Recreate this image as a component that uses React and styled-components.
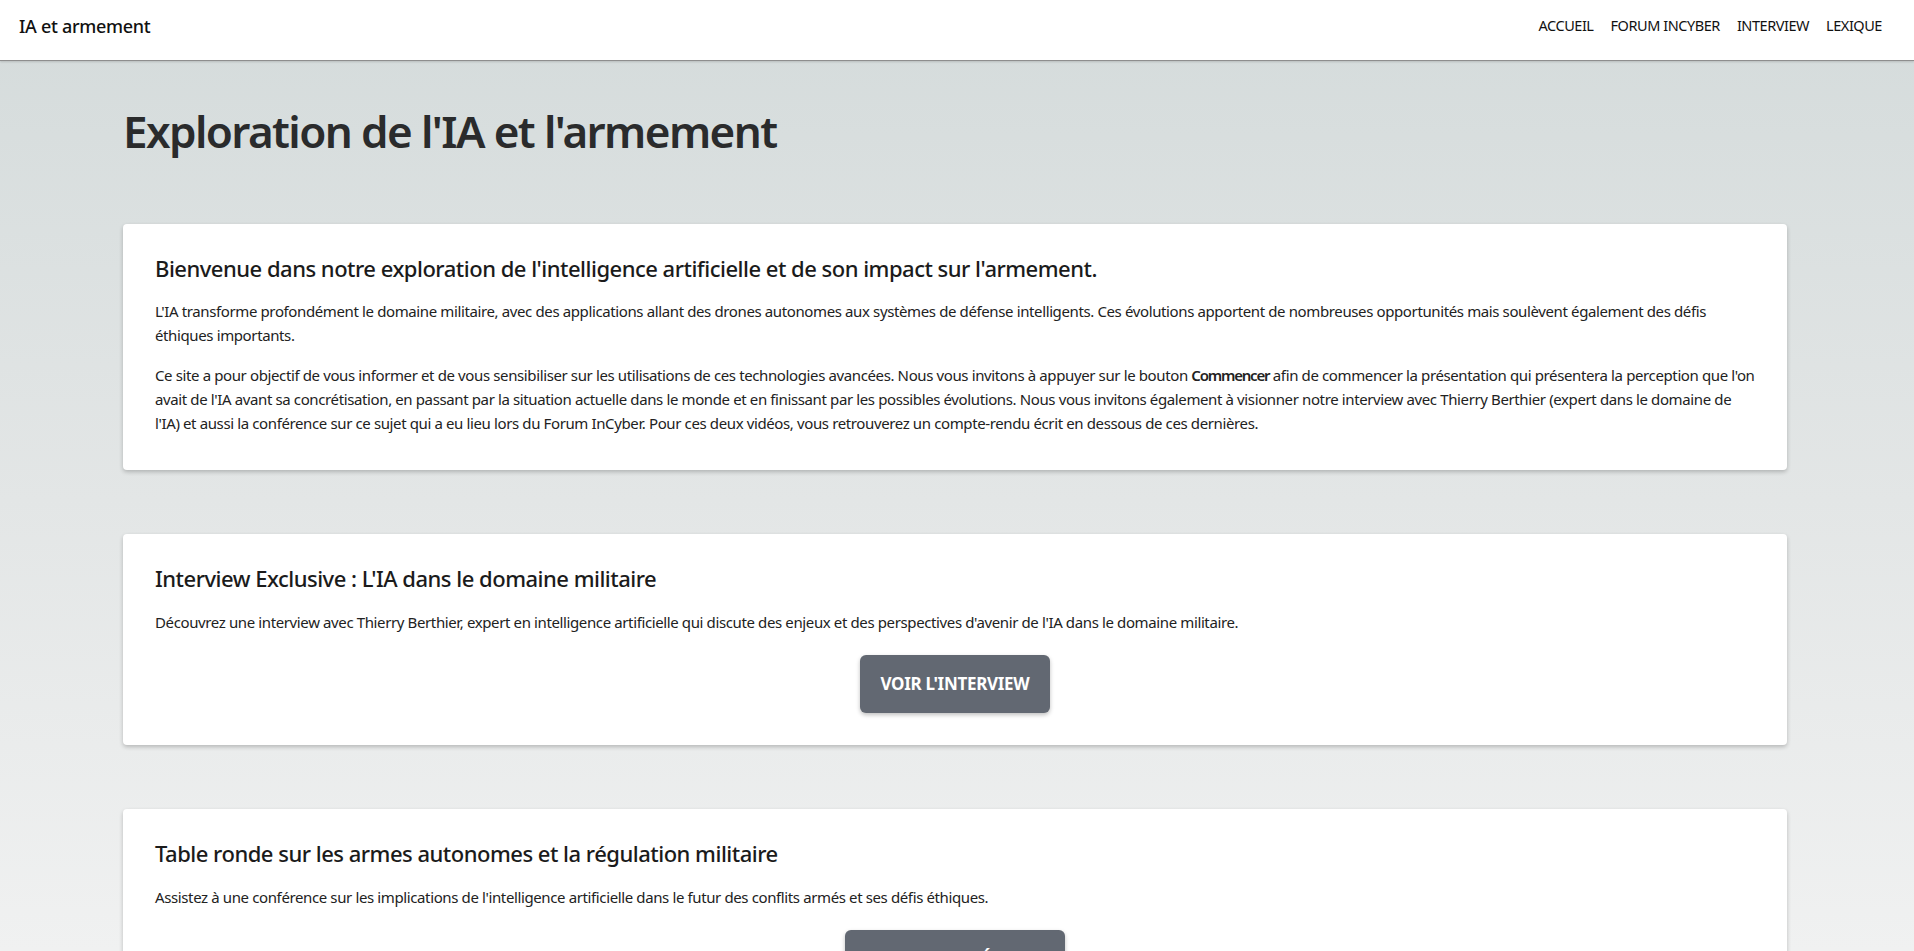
import React from "react";
import styled, { createGlobalStyle } from "styled-components";

const Global = createGlobalStyle`
  html, body { margin: 0; padding: 0; }
  body {
    font-family: "Noto Sans", "Open Sans", sans-serif;
    color: #222;
    background: linear-gradient(to bottom, #d4dbdb 0px, #e3e6e6 500px, #f0f1f1 951px);
    min-height: 951px;
  }
`;

const Nav = styled.header`
  height: 60px;
  background: #fff;
  border-bottom: 1px solid #8e8e8e;
  box-shadow: 0 1px 2px rgba(0,0,0,0.15);
  display: flex;
  align-items: center;
  justify-content: space-between;
  padding: 0 32px 0 19px;
`;

const Brand = styled.div`
  font-size: 18px;
  font-weight: 500;
  color: #111;
  letter-spacing: -0.3px;
  margin-top: -8px;
`;

const Links = styled.nav`
  display: flex;
  gap: 17px;
  margin-top: -10px;
`;

const Link = styled.a`
  font-size: 14.5px;
  color: #111;
  text-decoration: none;
  letter-spacing: -0.45px;
`;

const Main = styled.main`
  padding: 44px 127px 40px 123px;
  display: flex;
  flex-direction: column;
  gap: 64px;
`;

const Title = styled.h1`
  margin: 0;
  font-size: 44px;
  font-weight: 600;
  color: #2a2b2c;
  letter-spacing: -1.6px;
  line-height: 1.2;
  margin-bottom: 2px;
`;

const Card = styled.section`
  background: #fff;
  border-radius: 4px;
  box-shadow: 0 2px 4px rgba(0,0,0,0.22);
  padding: 30px 32px 32px;
  display: flex;
  flex-direction: column;
`;

const CardTitle = styled.h2`
  margin: 0 0 17px;
  font-size: 22px;
  font-weight: 500;
  color: #1b1b1b;
  letter-spacing: -0.5px;
  line-height: 1.3;
`;

const Text = styled.p`
  margin: 0 0 16px;
  font-size: 15px;
  line-height: 24px;
  color: #222;
  letter-spacing: -0.38px;
  &:last-child { margin-bottom: 3px; }
  b { font-weight: 600; letter-spacing: -1.2px; }
`;

const Button = styled.button`
  align-self: center;
  margin-top: 5px;
  background: #626872;
  color: #fff;
  border: none;
  border-radius: 6px;
  height: 58px;
  padding: 0 21px;
  font-family: inherit;
  font-size: 17px;
  font-weight: 700;
  letter-spacing: -0.3px;
  box-shadow: 0 2px 4px rgba(0,0,0,0.25);
  cursor: pointer;
`;

export default function App() {
  return (
    <>
      <Global />
      <Nav>
        <Brand>IA et armement</Brand>
        <Links>
          <Link href="#">ACCUEIL</Link>
          <Link href="#">FORUM INCYBER</Link>
          <Link href="#">INTERVIEW</Link>
          <Link href="#">LEXIQUE</Link>
        </Links>
      </Nav>
      <Main>
        <Title>Exploration de l'IA et l'armement</Title>
        <Card>
          <CardTitle>Bienvenue dans notre exploration de l'intelligence artificielle et de son impact sur l'armement.</CardTitle>
          <Text>
            L'IA transforme profondément le domaine militaire, avec des applications allant des drones autonomes aux systèmes de défense intelligents. Ces évolutions apportent de nombreuses opportunités mais soulèvent également des défis éthiques importants.
          </Text>
          <Text>
            Ce site a pour objectif de vous informer et de vous sensibiliser sur les utilisations de ces technologies avancées. Nous vous invitons à appuyer sur le bouton <b>Commencer</b> afin de commencer la présentation qui présentera la perception que l'on avait de l'IA avant sa concrétisation, en passant par la situation actuelle dans le monde et en finissant par les possibles évolutions. Nous vous invitons également à visionner notre interview avec Thierry Berthier (expert dans le domaine de l'IA) et aussi la conférence sur ce sujet qui a eu lieu lors du Forum InCyber. Pour ces deux vidéos, vous retrouverez un compte-rendu écrit en dessous de ces dernières.
          </Text>
        </Card>
        <Card>
          <CardTitle>Interview Exclusive : L'IA dans le domaine militaire</CardTitle>
          <Text>
            Découvrez une interview avec Thierry Berthier, expert en intelligence artificielle qui discute des enjeux et des perspectives d'avenir de l'IA dans le domaine militaire.
          </Text>
          <Button>VOIR L'INTERVIEW</Button>
        </Card>
        <Card>
          <CardTitle>Table ronde sur les armes autonomes et la régulation militaire</CardTitle>
          <Text>
            Assistez à une conférence sur les implications de l'intelligence artificielle dans le futur des conflits armés et ses défis éthiques.
          </Text>
          <Button>VOIR LA CONFÉRENCE</Button>
        </Card>
      </Main>
    </>
  );
}
